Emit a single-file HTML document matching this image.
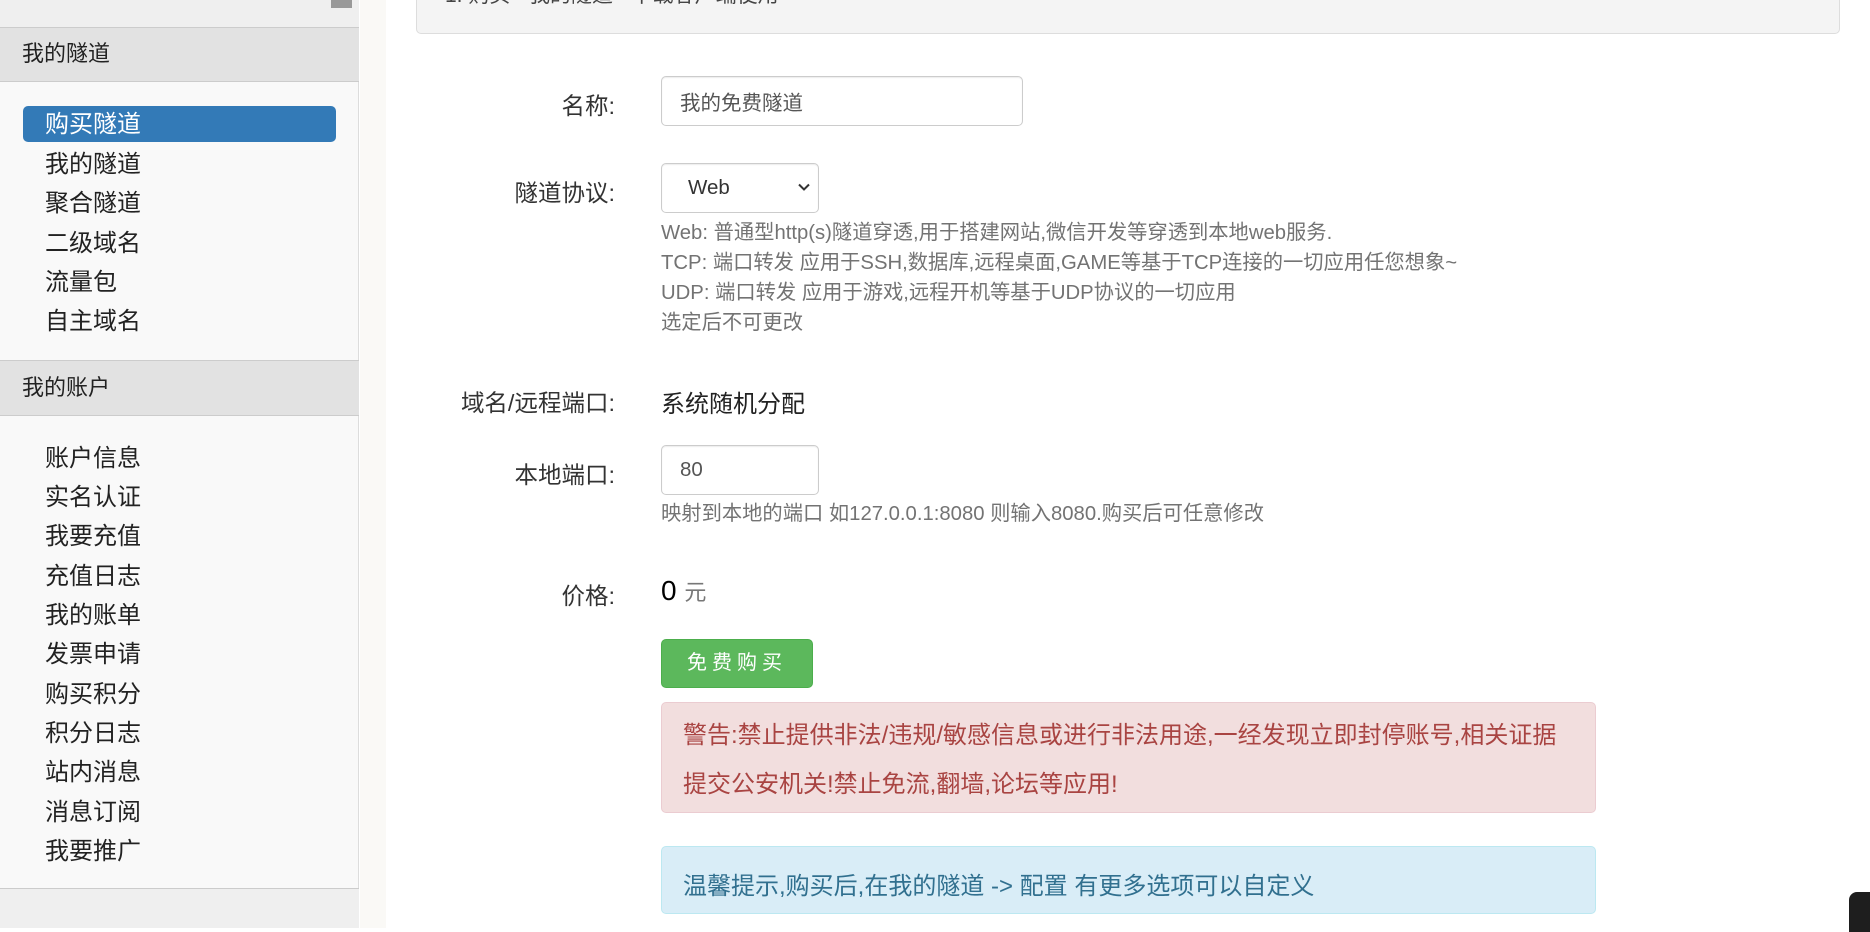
<!DOCTYPE html>
<html><head><meta charset="utf-8">
<style>
*{margin:0;padding:0;box-sizing:border-box}
body{width:1870px;height:928px;overflow:hidden;background:#fff;font-family:"Liberation Sans","Noto Sans CJK SC",sans-serif;color:#333;position:relative}
.a{position:absolute;white-space:nowrap}
#side{position:absolute;left:0;top:0;width:359px;height:928px;background:#f9f9f9;border-right:1px solid #ddd}
.hd{position:absolute;left:0;width:359px;background:#e2e2e2;border-top:1px solid #ccc;border-bottom:1px solid #ccc;font-size:22px;padding-left:22px;color:#222}
.it{position:absolute;left:45px;font-size:24px;color:#222;line-height:30px}
.lbl{position:absolute;right:1255px;font-size:23.5px;color:#333;text-align:right;white-space:nowrap}
.inp{position:absolute;border:1px solid #ccc;border-radius:5px;background:#fff;box-shadow:inset 0 1px 1px rgba(0,0,0,.075);font-size:20.5px;color:#555;padding-left:18px;display:flex;align-items:center}
.help{position:absolute;left:661px;font-size:20.3px;color:#737373;line-height:30px;white-space:nowrap}
</style></head><body>
<div id="side">
 <div class="a" style="left:0;top:0;width:359px;height:27px;background:#efefef"></div>
 <div class="a" style="left:331px;top:0;width:21px;height:8px;background:#999"></div>
 <div class="hd" style="top:27px;height:55px;line-height:52px">我的隧道</div>
 <div class="a" style="left:23px;top:106px;width:313px;height:36px;background:#337ab7;border-radius:5px"></div>
 <div class="it" style="top:110px;color:#fff">购买隧道</div>
 <div class="it" style="top:150px">我的隧道</div>
 <div class="it" style="top:189px">聚合隧道</div>
 <div class="it" style="top:229px">二级域名</div>
 <div class="it" style="top:268px">流量包</div>
 <div class="it" style="top:307px">自主域名</div>
 <div class="hd" style="top:360px;height:56px;line-height:54px">我的账户</div>
 <div class="it" style="top:444px">账户信息</div>
 <div class="it" style="top:483px">实名认证</div>
 <div class="it" style="top:522px">我要充值</div>
 <div class="it" style="top:562px">充值日志</div>
 <div class="it" style="top:601px">我的账单</div>
 <div class="it" style="top:640px">发票申请</div>
 <div class="it" style="top:680px">购买积分</div>
 <div class="it" style="top:719px">积分日志</div>
 <div class="it" style="top:758px">站内消息</div>
 <div class="it" style="top:798px">消息订阅</div>
 <div class="it" style="top:837px">我要推广</div>
 <div class="a" style="left:0;top:888px;width:359px;height:40px;background:#efefef;border-top:1px solid #ccc"></div>
</div>
<div class="a" style="left:360px;top:0;width:26px;height:928px;background:#faf9f6"></div>
<div class="a" style="left:416px;top:-10px;width:1424px;height:44px;background:#f4f4f4;border:1px solid #ddd;border-radius:5px;overflow:hidden">
 <div class="a" style="left:28px;top:-12px;font-size:21px;color:#444">1. 购买 - 我的隧道 - 下载客户端使用</div>
</div>

<div class="lbl" style="top:87px">名称:</div>
<div class="inp" style="left:661px;top:76px;width:362px;height:50px">我的免费隧道</div>

<div class="lbl" style="top:174px">隧道协议:</div>
<div class="inp" style="left:661px;top:163px;width:158px;height:50px;color:#333;padding-left:26px">Web
 <svg style="position:absolute;right:8px;top:19px" width="12" height="9" viewBox="0 0 12 9"><path d="M1 1.5L6 6.5L11 1.5" stroke="#333" stroke-width="2" fill="none"/></svg></div>
<div class="help" style="top:218px">Web: 普通型http(s)隧道穿透,用于搭建网站,微信开发等穿透到本地web服务.<br>TCP: 端口转发 应用于SSH,数据库,远程桌面,GAME等基于TCP连接的一切应用任您想象~<br>UDP: 端口转发 应用于游戏,远程开机等基于UDP协议的一切应用<br>选定后不可更改</div>

<div class="lbl" style="top:384px">域名/远程端口:</div>
<div class="a" style="left:661px;top:384px;font-size:24px;color:#222">系统随机分配</div>

<div class="lbl" style="top:456px">本地端口:</div>
<div class="inp" style="left:661px;top:445px;width:158px;height:50px">80</div>
<div class="help" style="top:499px">映射到本地的端口 如127.0.0.1:8080 则输入8080.购买后可任意修改</div>

<div class="lbl" style="top:577px">价格:</div>
<div class="a" style="left:661px;top:575px;font-size:28px;color:#000">0 <span style="font-size:22px;color:#777">元</span></div>

<div class="a" style="left:661px;top:639px;width:152px;height:49px;background:#5cb85c;border:1px solid #4cae4c;border-radius:5px;color:#fff;font-size:20px;text-align:center;line-height:47px;letter-spacing:5px">免费购买</div>

<div class="a" style="left:661px;top:702px;width:935px;height:111px;background:#f2dede;border:1px solid #ebccd1;border-radius:5px"></div>
<div class="a" style="left:683px;top:711px;font-size:24px;color:#a94442;line-height:49px">警告:禁止提供非法/违规/敏感信息或进行非法用途,一经发现立即封停账号,相关证据<br>提交公安机关!禁止免流,翻墙,论坛等应用!</div>

<div class="a" style="left:661px;top:846px;width:935px;height:68px;background:#d9edf7;border:1px solid #bce8f1;border-radius:5px"></div>
<div class="a" style="left:683px;top:866px;font-size:24px;color:#31708f">温馨提示,购买后,在我的隧道 -&gt; 配置 有更多选项可以自定义</div>

<div class="a" style="left:1849px;top:892px;width:30px;height:40px;background:#1e1e1e;border-radius:8px 0 0 0"></div>
</body></html>
